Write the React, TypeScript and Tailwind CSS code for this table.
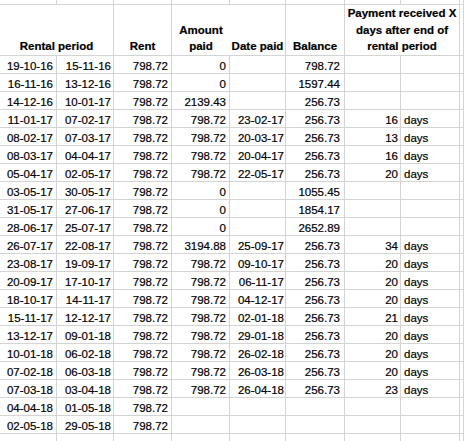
import type { ReactNode } from "react";

type Row = {
  from: string;
  to: string;
  rent: string;
  paid: string;
  datePaid: string;
  balance: string;
  days: string;
};

const rows: Row[] = [
  { from: "19-10-16", to: "15-11-16", rent: "798.72", paid: "0", datePaid: "", balance: "798.72", days: "" },
  { from: "16-11-16", to: "13-12-16", rent: "798.72", paid: "0", datePaid: "", balance: "1597.44", days: "" },
  { from: "14-12-16", to: "10-01-17", rent: "798.72", paid: "2139.43", datePaid: "", balance: "256.73", days: "" },
  { from: "11-01-17", to: "07-02-17", rent: "798.72", paid: "798.72", datePaid: "23-02-17", balance: "256.73", days: "16" },
  { from: "08-02-17", to: "07-03-17", rent: "798.72", paid: "798.72", datePaid: "20-03-17", balance: "256.73", days: "13" },
  { from: "08-03-17", to: "04-04-17", rent: "798.72", paid: "798.72", datePaid: "20-04-17", balance: "256.73", days: "16" },
  { from: "05-04-17", to: "02-05-17", rent: "798.72", paid: "798.72", datePaid: "22-05-17", balance: "256.73", days: "20" },
  { from: "03-05-17", to: "30-05-17", rent: "798.72", paid: "0", datePaid: "", balance: "1055.45", days: "" },
  { from: "31-05-17", to: "27-06-17", rent: "798.72", paid: "0", datePaid: "", balance: "1854.17", days: "" },
  { from: "28-06-17", to: "25-07-17", rent: "798.72", paid: "0", datePaid: "", balance: "2652.89", days: "" },
  { from: "26-07-17", to: "22-08-17", rent: "798.72", paid: "3194.88", datePaid: "25-09-17", balance: "256.73", days: "34" },
  { from: "23-08-17", to: "19-09-17", rent: "798.72", paid: "798.72", datePaid: "09-10-17", balance: "256.73", days: "20" },
  { from: "20-09-17", to: "17-10-17", rent: "798.72", paid: "798.72", datePaid: "06-11-17", balance: "256.73", days: "20" },
  { from: "18-10-17", to: "14-11-17", rent: "798.72", paid: "798.72", datePaid: "04-12-17", balance: "256.73", days: "20" },
  { from: "15-11-17", to: "12-12-17", rent: "798.72", paid: "798.72", datePaid: "02-01-18", balance: "256.73", days: "21" },
  { from: "13-12-17", to: "09-01-18", rent: "798.72", paid: "798.72", datePaid: "29-01-18", balance: "256.73", days: "20" },
  { from: "10-01-18", to: "06-02-18", rent: "798.72", paid: "798.72", datePaid: "26-02-18", balance: "256.73", days: "20" },
  { from: "07-02-18", to: "06-03-18", rent: "798.72", paid: "798.72", datePaid: "26-03-18", balance: "256.73", days: "20" },
  { from: "07-03-18", to: "03-04-18", rent: "798.72", paid: "798.72", datePaid: "26-04-18", balance: "256.73", days: "23" },
  { from: "04-04-18", to: "01-05-18", rent: "798.72", paid: "", datePaid: "", balance: "", days: "" },
  { from: "02-05-18", to: "29-05-18", rent: "798.72", paid: "", datePaid: "", balance: "", days: "" },
];

const Num = ({ children, pr = "pr-[3px]" }: { children?: ReactNode; pr?: string }): ReactNode => (
  <div className={`h-[18px] border-r border-b border-[#d4d4d4] pt-px text-right leading-[18px] whitespace-nowrap ${pr}`}>
    {children}
  </div>
);

const Blank = ({ h }: { h: string }): ReactNode => (
  <div className={`${h} border-r border-b border-[#d4d4d4]`} />
);

export default function App(): ReactNode {
  return (
    <div className="h-[441px] w-[464px] overflow-hidden bg-white text-[11.5px] text-black [-webkit-text-stroke:0.2px_black] [font-family:'Liberation_Sans',Arial,sans-serif]">
      <div className="grid grid-cols-[57px_57px_58px_58px_56px_59px_56px_59px_1fr]">
        {/* top sliver of the row above */}
        {Array.from({ length: 9 }).map((_, i) => (
          <Blank key={`t${i}`} h="h-[5px]" />
        ))}

        {/* header */}
        <div className="col-span-2 flex h-[51px] items-end justify-center border-r border-b border-[#d4d4d4] font-bold leading-[16.6px]">
          Rental period
        </div>
        <div className="flex h-[51px] items-end justify-center border-r border-b border-[#d4d4d4] font-bold leading-[16.6px]">
          Rent
        </div>
        <div className="flex h-[51px] items-end justify-center border-b border-[#d4d4d4] text-center font-bold leading-[16.6px]">
          Amount
          <br />
          paid
        </div>
        <div className="flex h-[51px] items-end justify-center border-r border-b border-[#d4d4d4] font-bold leading-[16.6px] whitespace-nowrap">
          Date paid
        </div>
        <div className="flex h-[51px] items-end justify-center border-r border-b border-[#d4d4d4] font-bold leading-[16.6px]">
          Balance
        </div>
        <div className="col-span-2 flex h-[51px] items-end justify-center border-r border-b border-[#d4d4d4] text-center font-bold leading-[16.6px] whitespace-nowrap">
          <span>
            Payment received X
            <br />
            days after end of
            <br />
            rental period
          </span>
        </div>
        <Blank h="h-[51px]" />

        {/* data rows */}
        {rows.map((r) => (
          <div key={r.from} className="contents">
            <Num>{r.from}</Num>
            <Num pr="pr-[2px]">{r.to}</Num>
            <Num>{r.rent}</Num>
            <Num>{r.paid}</Num>
            <Num pr="pr-[1px]">{r.datePaid}</Num>
            <Num pr="pr-[4px]">{r.balance}</Num>
            <Num pr="pr-[2px]">{r.days}</Num>
            <div className="h-[18px] border-r border-b border-[#d4d4d4] pt-px pl-[3px] leading-[18px]">
              {r.days ? "days" : ""}
            </div>
            <Blank h="h-[18px]" />
          </div>
        ))}

        {/* empty row below */}
        {Array.from({ length: 9 }).map((_, i) => (
          <Blank key={`b${i}`} h="h-[18px]" />
        ))}
      </div>
    </div>
  );
}
